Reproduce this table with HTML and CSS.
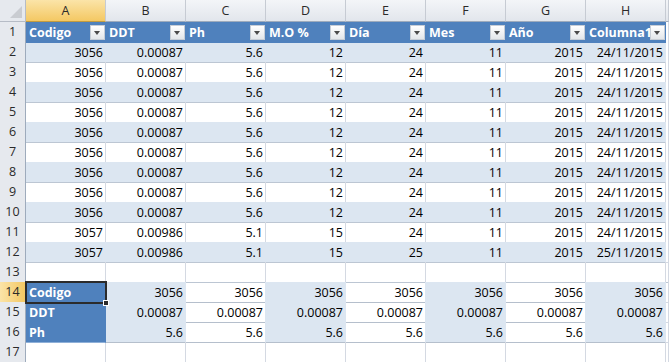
FILE: index.html
```html
<!DOCTYPE html>
<html lang="es">
<head>
<meta charset="utf-8">
<title>Hoja1</title>
<link rel="stylesheet" href="styles.css">
</head>
<body>
<div class="sheet">
  <div class="row hdr">
    <div class="corner"><svg width="12" height="12" viewBox="0 0 12 12"><polygon points="12,0 12,12 0,12" fill="#c9ccd1"/></svg></div>
    <div class="ch sel">A</div><div class="ch">B</div><div class="ch">C</div><div class="ch">D</div><div class="ch">E</div><div class="ch">F</div><div class="ch">G</div><div class="ch">H</div><div class="ch"></div>
  </div>
  <div class="row">
    <div class="rh">1</div>
    <div class="th"><span>Codigo</span><i class="dd"></i></div>
    <div class="th"><span>DDT</span><i class="dd"></i></div>
    <div class="th"><span>Ph</span><i class="dd"></i></div>
    <div class="th"><span>M.O %</span><i class="dd"></i></div>
    <div class="th"><span>Día</span><i class="dd"></i></div>
    <div class="th"><span>Mes</span><i class="dd"></i></div>
    <div class="th"><span>Año</span><i class="dd"></i></div>
    <div class="th"><span>Columna1</span><i class="dd"></i></div>
    <div class="c"></div>
  </div>
  <div class="row band">
    <div class="rh">2</div><div class="c">3056</div><div class="c">0.00087</div><div class="c">5.6</div><div class="c">12</div><div class="c">24</div><div class="c">11</div><div class="c">2015</div><div class="c">24/11/2015</div><div class="c e"></div>
  </div>
  <div class="row">
    <div class="rh">3</div><div class="c">3056</div><div class="c">0.00087</div><div class="c">5.6</div><div class="c">12</div><div class="c">24</div><div class="c">11</div><div class="c">2015</div><div class="c">24/11/2015</div><div class="c e"></div>
  </div>
  <div class="row band">
    <div class="rh">4</div><div class="c">3056</div><div class="c">0.00087</div><div class="c">5.6</div><div class="c">12</div><div class="c">24</div><div class="c">11</div><div class="c">2015</div><div class="c">24/11/2015</div><div class="c e"></div>
  </div>
  <div class="row">
    <div class="rh">5</div><div class="c">3056</div><div class="c">0.00087</div><div class="c">5.6</div><div class="c">12</div><div class="c">24</div><div class="c">11</div><div class="c">2015</div><div class="c">24/11/2015</div><div class="c e"></div>
  </div>
  <div class="row band">
    <div class="rh">6</div><div class="c">3056</div><div class="c">0.00087</div><div class="c">5.6</div><div class="c">12</div><div class="c">24</div><div class="c">11</div><div class="c">2015</div><div class="c">24/11/2015</div><div class="c e"></div>
  </div>
  <div class="row">
    <div class="rh">7</div><div class="c">3056</div><div class="c">0.00087</div><div class="c">5.6</div><div class="c">12</div><div class="c">24</div><div class="c">11</div><div class="c">2015</div><div class="c">24/11/2015</div><div class="c e"></div>
  </div>
  <div class="row band">
    <div class="rh">8</div><div class="c">3056</div><div class="c">0.00087</div><div class="c">5.6</div><div class="c">12</div><div class="c">24</div><div class="c">11</div><div class="c">2015</div><div class="c">24/11/2015</div><div class="c e"></div>
  </div>
  <div class="row">
    <div class="rh">9</div><div class="c">3056</div><div class="c">0.00087</div><div class="c">5.6</div><div class="c">12</div><div class="c">24</div><div class="c">11</div><div class="c">2015</div><div class="c">24/11/2015</div><div class="c e"></div>
  </div>
  <div class="row band">
    <div class="rh">10</div><div class="c">3056</div><div class="c">0.00087</div><div class="c">5.6</div><div class="c">12</div><div class="c">24</div><div class="c">11</div><div class="c">2015</div><div class="c">24/11/2015</div><div class="c e"></div>
  </div>
  <div class="row">
    <div class="rh">11</div><div class="c">3057</div><div class="c">0.00986</div><div class="c">5.1</div><div class="c">15</div><div class="c">24</div><div class="c">11</div><div class="c">2015</div><div class="c">24/11/2015</div><div class="c e"></div>
  </div>
  <div class="row band">
    <div class="rh">12</div><div class="c">3057</div><div class="c">0.00986</div><div class="c">5.1</div><div class="c">15</div><div class="c">25</div><div class="c">11</div><div class="c">2015</div><div class="c">25/11/2015</div><div class="c e"></div>
  </div>
  <div class="row">
    <div class="rh">13</div><div class="c"></div><div class="c"></div><div class="c"></div><div class="c"></div><div class="c"></div><div class="c"></div><div class="c"></div><div class="c"></div><div class="c"></div>
  </div>
  <div class="row">
    <div class="rh sel">14</div><div class="lbl active">Codigo<i class="handle"></i></div><div class="c b">3056</div><div class="c t">3056</div><div class="c b">3056</div><div class="c t">3056</div><div class="c b">3056</div><div class="c t">3056</div><div class="c b">3056</div><div class="c"></div>
  </div>
  <div class="row">
    <div class="rh">15</div><div class="lbl">DDT</div><div class="c b">0.00087</div><div class="c t">0.00087</div><div class="c b">0.00087</div><div class="c t">0.00087</div><div class="c b">0.00087</div><div class="c t">0.00087</div><div class="c b">0.00087</div><div class="c"></div>
  </div>
  <div class="row">
    <div class="rh">16</div><div class="lbl">Ph</div><div class="c b">5.6</div><div class="c t">5.6</div><div class="c b">5.6</div><div class="c t">5.6</div><div class="c b">5.6</div><div class="c t">5.6</div><div class="c b">5.6</div><div class="c"></div>
  </div>
  <div class="row">
    <div class="rh">17</div><div class="c"></div><div class="c"></div><div class="c"></div><div class="c"></div><div class="c"></div><div class="c"></div><div class="c"></div><div class="c"></div><div class="c"></div>
  </div>
</div>
</body>
</html>
```

FILE: styles.css
```css
* { box-sizing: border-box; }
html, body { margin: 0; padding: 0; background: #fff; }
body {
  font-family: "Open Sans", "Liberation Sans", sans-serif;
  font-size: 12.5px;
  color: #000;
  overflow: hidden;
}
.sheet {
  width: 669px;
  height: 362px;
  overflow: hidden;
}
.row {
  display: grid;
  grid-template-columns: 26px repeat(8, 80px) 3px;
  height: 20px;
}
.row.hdr { height: 22px; }

.corner {
  background: #e6e9ee;
  border-right: 1px solid #b6bcc6;
  border-bottom: 1px solid #b6bcc6;
  display: flex;
  align-items: flex-end;
  justify-content: flex-end;
  padding: 0 3px 3px 0;
}
.ch {
  background: linear-gradient(#f3f5f8, #e2e6ec);
  border-right: 1px solid #c6cbd3;
  border-bottom: 1px solid #9eabbc;
  color: #2a2a2a;
  text-align: center;
  line-height: 21px;
}
.ch.sel {
  background: linear-gradient(#fbe4a8, #f4c863);
  border-bottom-color: #c29b3f;
}
.rh {
  background: #e6e9ee;
  border-right: 1px solid #9eabbc;
  border-bottom: 1px solid #c6cbd3;
  color: #2a2a2a;
  text-align: center;
  line-height: 20px;
}
.rh.sel {
  background: linear-gradient(90deg, #fbe4a8, #f4c863);
  border-right-color: #c29b3f;
}

.c {
  border-right: 1px solid #d4d9e2;
  border-bottom: 1px solid #d4d9e2;
  text-align: right;
  padding: 1px 2px 0 0;
  line-height: 19px;
  white-space: nowrap;
  overflow: hidden;
}
.band .c, .c.b {
  background: #dce6f1;
  border-right-color: #dce6f1;
}
.band .c, .row.band + .row .c { border-bottom-color: #bcc6d3; }
.band .c.e, .row.band + .row .c.e, .row.band .c.e {
  background: #fff;
  border-right-color: #d4d9e2;
  border-bottom-color: #d4d9e2;
}
.c.b, .c.t { border-bottom-color: #b5bfcc; }
.c.t { border-right-color: #dce6f1; }

.th {
  position: relative;
  background: #4f81bd;
  color: #fff;
  font-weight: bold;
  padding: 1px 0 0 3px;
  line-height: 19px;
  white-space: nowrap;
  overflow: hidden;
  border-bottom: 1px solid #4f81bd;
}
.dd {
  position: absolute;
  right: 1px;
  top: 3px;
  width: 15px;
  height: 15px;
  background: linear-gradient(#ffffff, #e3e6ea);
  border: 1px solid #c7cdd6;
}
.dd::after {
  content: "";
  position: absolute;
  left: 3px;
  top: 5px;
  border-left: 3.5px solid transparent;
  border-right: 3.5px solid transparent;
  border-top: 4px solid #4a4a4a;
}

.lbl {
  position: relative;
  background: #4f81bd;
  color: #fff;
  font-weight: bold;
  padding: 1px 0 0 3px;
  line-height: 19px;
  border-bottom: 1px solid #8fb0d8;
  border-right: 1px solid #4f81bd;
}
.lbl.active {
  outline: 2px solid #2b2b2b;
  outline-offset: -1px;
  z-index: 1;
}
.handle {
  position: absolute;
  right: -4px;
  bottom: -4px;
  width: 6px;
  height: 6px;
  background: #2b2b2b;
  border: 1px solid #fff;
}
```
